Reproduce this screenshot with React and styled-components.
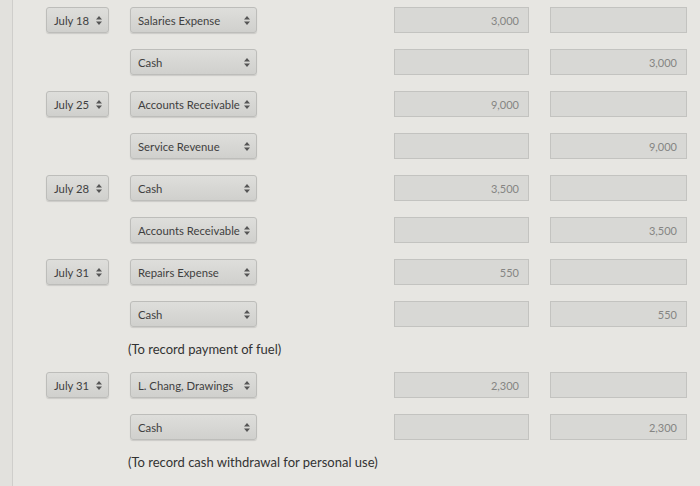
import React from "react";
import styled, { createGlobalStyle } from "styled-components";

const Global = createGlobalStyle`
  html, body { margin: 0; padding: 0; }
  body {
    background: #e7e6e2;
    font-family: Lato, "Open Sans", "Liberation Sans", sans-serif;
    width: 700px;
    height: 486px;
    overflow: hidden;
  }
`;

const Page = styled.div`
  display: flex;
  height: 486px;
`;

const Strip = styled.div`
  width: 12px;
  flex: none;
  background: #e2e1dd;
  border-right: 1px solid #cfcecb;
`;

const Sheet = styled.div`
  flex: 1;
  padding: 7px 0 0 33px;
  display: grid;
  grid-template-columns: 84px 264px 156px 137px;
  grid-auto-rows: auto;
  row-gap: 16px;
  align-content: start;
`;

const Select = styled.div`
  box-sizing: border-box;
  width: ${(p) => p.$w}px;
  height: 26px;
  display: flex;
  align-items: center;
  justify-content: space-between;
  padding: 0 6px 0 7px;
  border: 1px solid #bdbdba;
  border-radius: 3px;
  background: linear-gradient(#dededb, #d0d0cd);
  box-shadow: 0 1px 1px rgba(0, 0, 0, 0.12);
  color: #3f3f3f;
  font-size: 11.3px;
  white-space: nowrap;
`;

const Arrows = styled.svg`
  width: 6px;
  height: 9px;
  flex: none;
`;

const Amount = styled.div`
  box-sizing: border-box;
  width: ${(p) => p.$w}px;
  height: 26px;
  display: flex;
  align-items: center;
  justify-content: flex-end;
  padding-right: 9px;
  border: 1px solid #c3c3c0;
  background: #d8d8d5;
  color: #858583;
  font-size: 11px;
`;

const Empty = styled.div``;

const Note = styled.div`
  grid-column: 2 / -1;
  margin-left: -2px;
  height: 13px;
  line-height: 13px;
  font-size: 13px;
  color: #333;
  white-space: nowrap;
`;

const Caret = () => (
  <Arrows viewBox="0 0 6 9">
    <path d="M3 0 L6 3.5 H0 Z M3 9 L6 5.5 H0 Z" fill="#555" />
  </Arrows>
);

const rows = [
  { type: "row", date: "July 18", acct: "Salaries Expense", dr: "3,000", cr: "" },
  { type: "row", acct: "Cash", dr: "", cr: "3,000" },
  { type: "row", date: "July 25", acct: "Accounts Receivable", dr: "9,000", cr: "" },
  { type: "row", acct: "Service Revenue", dr: "", cr: "9,000" },
  { type: "row", date: "July 28", acct: "Cash", dr: "3,500", cr: "" },
  { type: "row", acct: "Accounts Receivable", dr: "", cr: "3,500" },
  { type: "row", date: "July 31", acct: "Repairs Expense", dr: "550", cr: "" },
  { type: "row", acct: "Cash", dr: "", cr: "550" },
  { type: "note", text: "(To record payment of fuel)" },
  { type: "row", date: "July 31", acct: "L. Chang, Drawings", dr: "2,300", cr: "" },
  { type: "row", acct: "Cash", dr: "", cr: "2,300" },
  { type: "note", text: "(To record cash withdrawal for personal use)" },
];

export default function App() {
  return (
    <>
      <Global />
      <Page>
        <Strip />
        <Sheet>
          {rows.map((r, i) =>
            r.type === "note" ? (
              <Note key={i}>{r.text}</Note>
            ) : (
              <React.Fragment key={i}>
                {r.date ? (
                  <Select $w={63}>
                    {r.date}
                    <Caret />
                  </Select>
                ) : (
                  <Empty />
                )}
                <Select $w={127}>
                  {r.acct}
                  <Caret />
                </Select>
                <Amount $w={135}>{r.dr}</Amount>
                <Amount $w={137}>{r.cr}</Amount>
              </React.Fragment>
            )
          )}
        </Sheet>
      </Page>
    </>
  );
}
